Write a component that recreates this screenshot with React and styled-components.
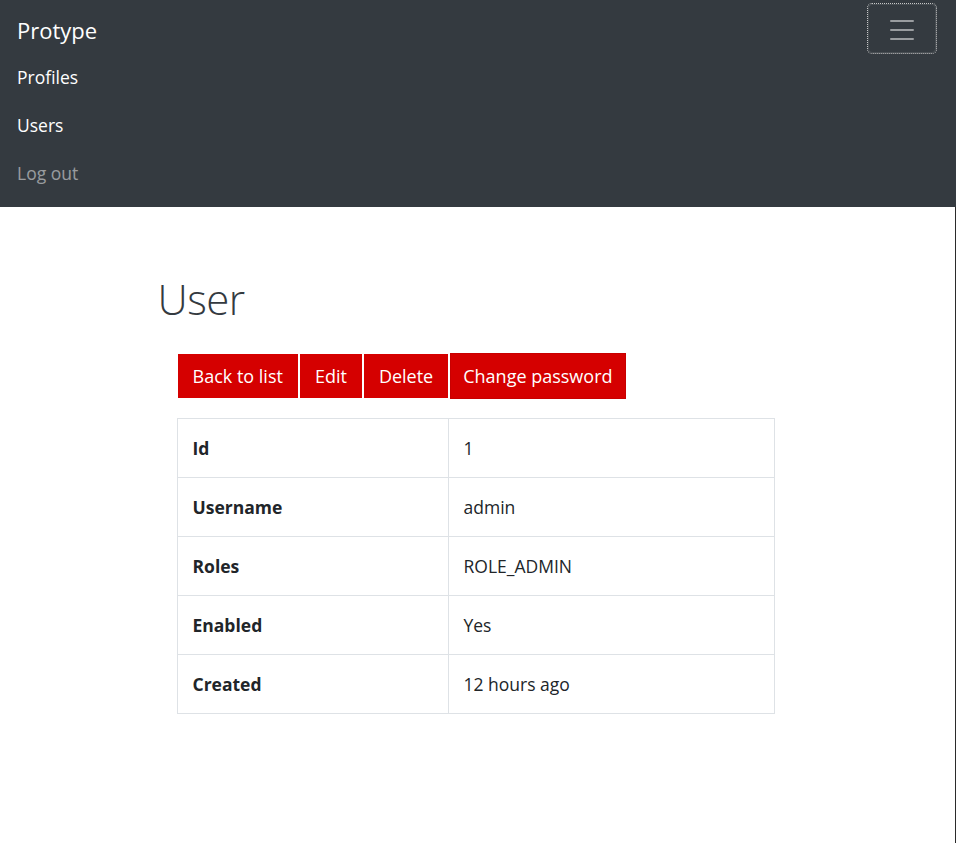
import React from "react";
import styled, { createGlobalStyle } from "styled-components";

const GlobalStyle = createGlobalStyle`
  html, body {
    margin: 0;
    padding: 0;
    background: #fff;
  }
  body {
    font-family: "Open Sans", "Noto Sans", sans-serif;
    color: #212529;
  }
`;

const Page = styled.div`
  display: flex;
  flex-direction: column;
  min-height: 843px;
`;

const Navbar = styled.nav`
  background: #343a40;
  height: 207px;
  box-sizing: border-box;
  padding: 4px 20px 0 17px;
  display: flex;
  flex-direction: column;
`;

const TopRow = styled.div`
  display: flex;
  justify-content: space-between;
  align-items: flex-start;
`;

const Brand = styled.a`
  color: #fff;
  font-size: 22px;
  line-height: 52px;
  text-decoration: none;
`;

const Toggler = styled.button`
  width: 68px;
  height: 49px;
  box-sizing: border-box;
  border: 1px solid rgba(255, 255, 255, 0.1);
  border-radius: 4px;
  background: transparent;
  outline: 1px dotted #c8c8c8;
  display: flex;
  align-items: center;
  justify-content: center;
  padding: 0;
`;

const NavList = styled.ul`
  list-style: none;
  margin: -3px 0 0;
  padding: 0;
  display: flex;
  flex-direction: column;
`;

const NavLink = styled.a`
  display: block;
  height: 48px;
  line-height: 48px;
  font-size: 17.5px;
  color: ${(p) => (p.$muted ? "rgba(255,255,255,0.5)" : "#fff")};
  text-decoration: none;
`;

const Main = styled.main`
  flex: 1;
  border-right: 1px solid #2b2b2b;
`;

const Container = styled.div`
  width: 640px;
  margin: 0 auto;
  padding-top: 65px;
`;

const Title = styled.h1`
  margin: 0;
  font-size: 42px;
  font-weight: 300;
  line-height: 54px;
  color: #343a40;
  letter-spacing: -0.5px;
`;

const Body = styled.div`
  padding: 27px 0 0 19px;
`;

const Actions = styled.div`
  display: flex;
  align-items: center;
  gap: 2px;
  padding-left: 1px;
`;

const ActionButton = styled.button`
  background: #d50000;
  color: #fff;
  border: ${(p) => (p.$primary ? "1px solid #c80000" : "0")};
  font-family: inherit;
  font-size: 18px;
  line-height: 24px;
  height: ${(p) => (p.$primary ? "46px" : "44px")};
  padding: 0 ${(p) => (p.$primary ? "12px" : "15px")};
  cursor: pointer;
`;

const Table = styled.table`
  margin-top: 19px;
  width: 598px;
  border-collapse: collapse;
  font-size: 17.5px;
  color: #212529;
`;

const Cell = styled.td`
  border: 1px solid #dee2e6;
  height: 59px;
  padding: 0 15px;
  box-sizing: border-box;
  font-weight: ${(p) => (p.$head ? 700 : 400)};
  width: ${(p) => (p.$head ? "271px" : "auto")};
`;

const rows = [
  ["Id", "1"],
  ["Username", "admin"],
  ["Roles", "ROLE_ADMIN"],
  ["Enabled", "Yes"],
  ["Created", "12 hours ago"],
];

const MenuIcon = () => (
  <svg width="30" height="30" viewBox="0 0 30 30">
    <path
      d="M4 7h22M4 16h22M4 25h22"
      stroke="rgba(255,255,255,0.5)"
      strokeWidth="2"
      strokeLinecap="round"
    />
  </svg>
);

export default function App() {
  return (
    <Page>
      <GlobalStyle />
      <Navbar>
        <TopRow>
          <Brand href="#">Protype</Brand>
          <Toggler aria-label="Toggle navigation">
            <MenuIcon />
          </Toggler>
        </TopRow>
        <NavList>
          <li><NavLink href="#">Profiles</NavLink></li>
          <li><NavLink href="#">Users</NavLink></li>
          <li><NavLink href="#" $muted>Log out</NavLink></li>
        </NavList>
      </Navbar>
      <Main>
        <Container>
          <Title>User</Title>
          <Body>
            <Actions>
              <ActionButton>Back to list</ActionButton>
              <ActionButton>Edit</ActionButton>
              <ActionButton>Delete</ActionButton>
              <ActionButton $primary>Change password</ActionButton>
            </Actions>
            <Table>
              <tbody>
                {rows.map(([k, v]) => (
                  <tr key={k}>
                    <Cell $head>{k}</Cell>
                    <Cell>{v}</Cell>
                  </tr>
                ))}
              </tbody>
            </Table>
          </Body>
        </Container>
      </Main>
    </Page>
  );
}
